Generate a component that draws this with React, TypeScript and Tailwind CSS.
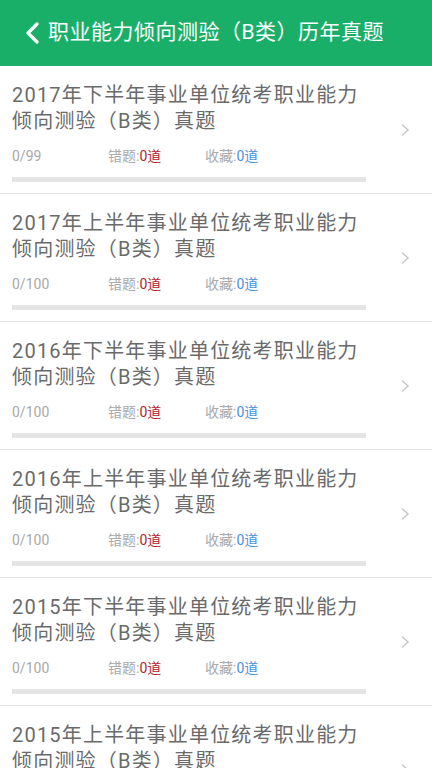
const FONT = { fontFamily: 'Roboto, "Noto Sans CJK SC", sans-serif' };

const PAPERS = [
  { title: '2017年下半年事业单位统考职业能力倾向测验（B类）真题', total: 99 },
  { title: '2017年上半年事业单位统考职业能力倾向测验（B类）真题', total: 100 },
  { title: '2016年下半年事业单位统考职业能力倾向测验（B类）真题', total: 100 },
  { title: '2016年上半年事业单位统考职业能力倾向测验（B类）真题', total: 100 },
  { title: '2015年下半年事业单位统考职业能力倾向测验（B类）真题', total: 100 },
  { title: '2015年上半年事业单位统考职业能力倾向测验（B类）真题', total: 100 },
];

function PaperRow({ title, total }: { title: string; total: number }) {
  return (
    <div className="flex items-center border-b border-[#e3e3e3] bg-white">
      <div className="flex-1 pl-3 pt-4 pb-[11px]">
        <div className="w-[358px] text-[20px] leading-[26px] tracking-[1.2px] text-[#6a6a6a]">{title}</div>
        <div className="mt-3 flex h-5 items-center text-[14px] leading-5 text-[#a9a9a9]">
          <span className="w-[96px]">0/{total}</span>
          <span className="w-[97px]">
            错题:<span className="text-[#b3262b]">0道</span>
          </span>
          <span>
            收藏:<span className="text-[#4a8fe0]">0道</span>
          </span>
        </div>
        <div className="mt-[11px] h-[5px] w-[354px] bg-[#e4e4e4]" />
      </div>
      <svg width="10" height="14" viewBox="0 0 10 14" className="mr-[22px]">
        <path d="M2 1.5 L8 7 L2 12.5" fill="none" stroke="#c9c9c9" strokeWidth="1.6" />
      </svg>
    </div>
  );
}

export default function App() {
  return (
    <div className="h-[768px] w-[432px] overflow-hidden bg-white" style={FONT}>
      <div className="flex h-[66px] items-center bg-[#1aaf69] pl-6">
        <svg width="16" height="22" viewBox="0 0 16 22">
          <path d="M13 2 L4 11 L13 20" fill="none" stroke="#fff" strokeWidth="3.2" strokeLinecap="round" strokeLinejoin="round" />
        </svg>
        <span className="ml-[8px] text-[21px] tracking-[0.5px] text-white">职业能力倾向测验（B类）历年真题</span>
      </div>
      {PAPERS.map((p) => (
        <PaperRow key={p.title} title={p.title} total={p.total} />
      ))}
    </div>
  );
}
